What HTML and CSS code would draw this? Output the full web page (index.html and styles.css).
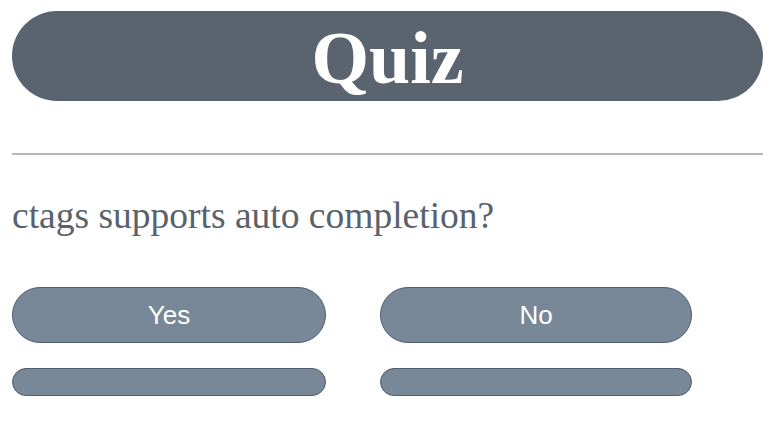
FILE: index.html
```html
<!DOCTYPE html>
<html>
<head>
<meta charset="utf-8">
<link rel="stylesheet" href="styles.css">
</head>
<body>
<div class="page">
  <header class="banner"><h1 class="title">Quiz</h1></header>
  <hr class="rule">
  <p class="question">ctags supports auto completion?</p>
  <div class="answers">
    <button class="answer">Yes</button>
    <button class="answer">No</button>
    <button class="answer slim"></button>
    <button class="answer slim"></button>
  </div>
</div>
</body>
</html>
```
FILE: styles.css
```css
html, body {
  margin: 0;
  padding: 0;
  background: #ffffff;
}
.page {
  padding: 11px 10px 0 12px;
}
.banner {
  height: 90px;
  border-radius: 45px;
  background: #5a646e;
  display: flex;
  align-items: center;
  justify-content: center;
}
.title {
  margin: 0;
  color: #ffffff;
  font-family: "Liberation Serif", "Times New Roman", serif;
  font-weight: bold;
  font-size: 74px;
  line-height: 1;
  position: relative;
  top: 2px;
}
.rule {
  margin: 52px 0 0 0;
  border: 0;
  border-top: 2px solid #b4b6b9;
  height: 0;
}
.question {
  margin: 40px 0 0 0;
  font-family: "Liberation Serif", "Times New Roman", serif;
  font-size: 37.5px;
  color: #59626c;
  line-height: 42px;
}
.answers {
  margin-top: 50px;
  display: grid;
  grid-template-columns: 314px 312px;
  column-gap: 54px;
  row-gap: 25px;
}
.answer {
  height: 56px;
  border-radius: 28px;
  border: 1px solid #4f5c6c;
  background: #798898;
  color: #ffffff;
  font-family: "Liberation Sans", Arial, sans-serif;
  font-size: 26px;
  padding: 0;
}
.answer.slim {
  height: 28px;
  border-radius: 14px;
}
```
